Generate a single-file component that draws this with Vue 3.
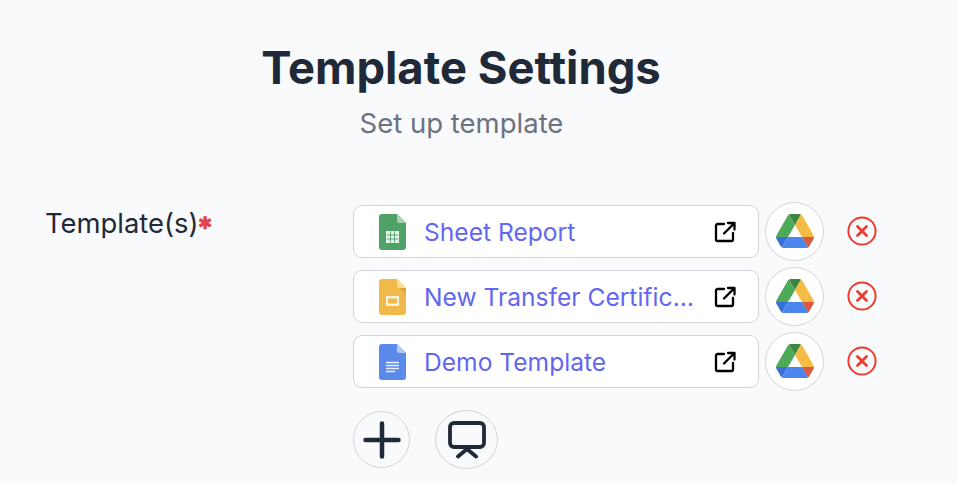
<script setup>
const templates = [
  { id: 1, name: "Sheet Report", type: "sheet" },
  { id: 2, name: "New Transfer Certificate Template", type: "slide" },
  { id: 3, name: "Demo Template", type: "doc" },
];
</script>

<template>
  <div class="page">
    <div class="header">
      <h1>Template Settings</h1>
      <p>Set up template</p>
    </div>

    <div class="form-row">
      <label class="field-label">Template(s)<span class="req">✱</span></label>

      <div class="field">
        <div v-for="t in templates" :key="t.id" class="tpl-row">
          <div class="tpl-card">
            <svg class="file-icon" viewBox="0 0 27 36">
              <template v-if="t.type === 'sheet'">
                <path d="M3 0h15l9 9v24a3 3 0 0 1-3 3H3a3 3 0 0 1-3-3V3a3 3 0 0 1 3-3z" fill="#4fa268" />
                <path d="M18 0l9 9h-7a2 2 0 0 1-2-2z" fill="#a6d1b5" />
                <path d="M7 17h13v12H7z" fill="#e8f3ec" />
                <path d="M7.800 21h11.400M7.800 25h11.400M11.500 17.600v11M15.500 17.600v11" stroke="#4fa268" stroke-width="0.9" fill="none" />
              </template>
              <template v-else-if="t.type === 'slide'">
                <path d="M3 0h15l9 9v24a3 3 0 0 1-3 3H3a3 3 0 0 1-3-3V3a3 3 0 0 1 3-3z" fill="#f0ba4a" />
                <path d="M18 0l9 9h-7a2 2 0 0 1-2-2z" fill="#f8dd94" />
                <path d="M20 9l7 6V9z" fill="#e2a33c" />
                <path d="M7 17h13v10H7z" fill="#f6efe0" />
                <path d="M9 19.500h9v5H9z" fill="#f0ba4a" />
              </template>
              <template v-else>
                <path d="M3 0h15l9 9v24a3 3 0 0 1-3 3H3a3 3 0 0 1-3-3V3a3 3 0 0 1 3-3z" fill="#5c8aea" />
                <path d="M18 0l9 9h-7a2 2 0 0 1-2-2z" fill="#b4c9f5" />
                <path d="M7 18.500h13M7 21.500h13M7 24.500h13M7 27.500h9" stroke="#e8effc" stroke-width="1.300" fill="none" />
              </template>
            </svg>
            <a class="tpl-name">{{ t.name }}</a>
            <svg class="open-icon" viewBox="0 0 22 22" fill="none" stroke="#000" stroke-width="2.300" stroke-linecap="round" stroke-linejoin="round">
              <path d="M10 3H3.500A1.500 1.500 0 0 0 2 4.500v14A1.500 1.500 0 0 0 3.500 20h14a1.500 1.500 0 0 0 1.500-1.500V12" />
              <path d="M10 12.500L20 2.500M14 2h6.500v6.500" />
            </svg>
          </div>

          <button class="drive-btn" type="button">
            <svg viewBox="0 0 87.300 78" width="38" height="34">
              <path d="M6.600 66.850l3.850 6.650c.8 1.400 1.950 2.500 3.300 3.300L27.500 53H0c0 1.550.4 3.100 1.200 4.500z" fill="#3a6fd8" />
              <path d="M43.650 25L29.900 1.200c-1.350.8-2.500 1.900-3.300 3.300L1.200 48.500A9.060 9.060 0 0 0 0 53h27.500z" fill="#4caa58" />
              <path d="M73.550 76.800c1.350-.8 2.500-1.900 3.300-3.300l1.600-2.750L86.100 57.500c.8-1.400 1.200-2.950 1.200-4.500H59.800l5.850 11.500z" fill="#db5a41" />
              <path d="M43.650 25L57.400 1.200C56.050.4 54.500 0 52.900 0H34.400c-1.600 0-3.150.45-4.500 1.200z" fill="#3b8740" />
              <path d="M59.800 53H27.500L13.750 76.800c1.350.8 2.900 1.200 4.500 1.200h50.800c1.600 0 3.150-.45 4.500-1.200z" fill="#4a86ee" />
              <path d="M73.400 26.500L60.700 4.500c-.8-1.400-1.950-2.500-3.300-3.300L43.650 25 59.800 53h27.450c0-1.550-.4-3.100-1.200-4.500z" fill="#f6bb44" />
            </svg>
          </button>

          <button class="remove-btn" type="button">
            <svg viewBox="0 0 30 30" width="30" height="30" fill="none" stroke="#ee3b2f" stroke-linecap="round">
              <circle cx="15" cy="15" r="13.600" stroke-width="2" />
              <path d="M10.500 10.500l9 9M19.500 10.500l-9 9" stroke-width="2.800" />
            </svg>
          </button>
        </div>

        <div class="actions">
          <button class="round-btn add" type="button">
            <svg viewBox="0 0 38 38" width="38" height="38" fill="none" stroke="#1f2937" stroke-width="4.500" stroke-linecap="round">
              <path d="M19 2.500v33M2.500 19h33" />
            </svg>
          </button>
          <button class="round-btn present" type="button">
            <svg viewBox="0 0 38 38" width="38" height="38" fill="none" stroke="#1f2937" stroke-width="3.800" stroke-linecap="round" stroke-linejoin="round">
              <rect x="2" y="2" width="34" height="24" rx="4" />
              <path d="M19 28L10 35.500M19 28L28 35.500" />
            </svg>
          </button>
        </div>
      </div>
    </div>
  </div>
</template>

<style>
html,
body {
  margin: 0;
  background: #f9fafb;
}
</style>

<style scoped>
.page {
  width: 957px;
  height: 484px;
  overflow: hidden;
  background: #f9fafb;
  font-family: Inter, "Liberation Sans", sans-serif;
  box-sizing: border-box;
  padding-top: 34px;
}

.header {
  width: 922px;
  text-align: center;
}

h1 {
  margin: 0;
  font-size: 45.400px;
  line-height: 68px;
  font-weight: 700;
  color: #1f2937;
}

.header p {
  margin: 0 0 0 1px;
  font-size: 27.500px;
  line-height: 42px;
  color: #6b7280;
}

.form-row {
  display: flex;
  margin-top: 57px;
}

.field-label {
  width: 353px;
  box-sizing: border-box;
  padding: 1px 0 0 45px;
  font-size: 27.400px;
  line-height: 42px;
  color: #1f2937;
}

.req {
  position: relative;
  top: -4px;
  font-size: 17px;
  font-weight: 700;
  color: #e0474a;
}

.field {
  display: flex;
  flex-direction: column;
  gap: 5px;
}

.tpl-row {
  display: flex;
  align-items: center;
  height: 60px;
}

.tpl-card {
  width: 406px;
  height: 53px;
  box-sizing: border-box;
  display: flex;
  align-items: center;
  padding: 2px 0 0 25px;
  background: #fff;
  border: 1px solid #d1d5db;
  border-radius: 9px;
}

.file-icon {
  width: 27px;
  height: 36px;
  flex: none;
}

.tpl-name {
  width: 273px;
  margin-left: 18px;
  font-size: 24.600px;
  color: #6366f1;
  white-space: nowrap;
  overflow: hidden;
  text-overflow: ellipsis;
}

.open-icon {
  width: 22px;
  height: 22px;
  margin-left: 17px;
  flex: none;
}

.drive-btn {
  width: 59px;
  height: 59px;
  margin-left: 6px;
  padding: 0;
  display: flex;
  align-items: center;
  justify-content: center;
  background: #fff;
  border: 1px solid #d1d5db;
  border-radius: 50%;
}

.remove-btn {
  width: 30px;
  height: 30px;
  margin-left: 23px;
  padding: 0;
  border: none;
  background: none;
}

.actions {
  display: flex;
  align-items: center;
  gap: 25px;
  margin-top: 14px;
}

.round-btn {
  padding: 0;
  display: flex;
  align-items: center;
  justify-content: center;
  background: #f9fafb;
  border: 1px solid #d1d5db;
  border-radius: 50%;
}

.add {
  width: 57px;
  height: 57px;
}

.present {
  width: 63px;
  height: 59px;
}
</style>
